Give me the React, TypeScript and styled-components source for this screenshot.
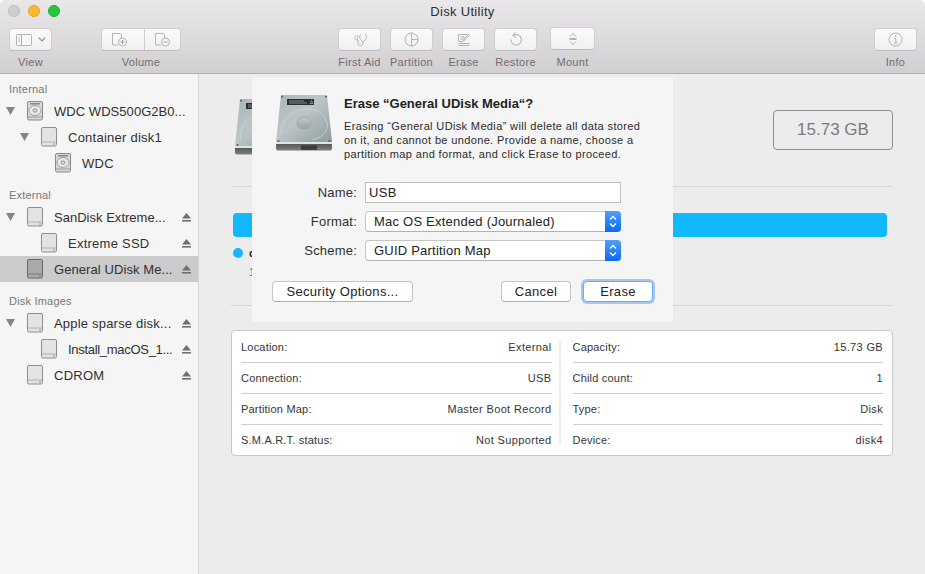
import React from "react";
import styled, { createGlobalStyle } from "styled-components";

const Global = createGlobalStyle`
  html, body { margin: 0; padding: 0; background: #fff; }
  body { font-family: "Liberation Sans", Arial, sans-serif; font-size: 13px; color: #2b2b2b; }
  * { box-sizing: border-box; }
`;

const Win = styled.div`
  position: relative; width: 925px; height: 574px; overflow: hidden;
  display: flex; flex-direction: column; border-radius: 5px 5px 0 0;
`;
const Toolbar = styled.header`
  height: 74px; flex: none; display: flex; flex-direction: column;
  background: linear-gradient(#e9e7e9, #d1cfd1); border-bottom: 1px solid #b1afb1;
`;
const TitleBar = styled.div`position: relative; height: 27px; text-align: center; line-height: 23px; font-size: 13px; color: #2e2e2e; letter-spacing: .3px;`;
const Lights = styled.div`position: absolute; left: 8px; top: 5px; display: flex; gap: 8px;`;
const Light = styled.span<{ $c: string; $b: string }>`
  width: 12px; height: 12px; border-radius: 50%; background: ${p => p.$c}; border: 1px solid ${p => p.$b};
`;
const Tools = styled.div`display: flex; padding-left: 9px;`;
const ToolItem = styled.div<{ $w: number; $ml: number }>`
  width: ${p => p.$w}px; margin-left: ${p => p.$ml}px; display: flex; flex-direction: column; align-items: center; flex: none;
`;
const ToolBtn = styled.div<{ $up?: boolean }>`
  width: 100%; height: 23px; margin-top: ${p => (p.$up ? 0 : 1)}px; margin-bottom: ${p => (p.$up ? 1 : 0)}px;
  display: flex; align-items: center; justify-content: center; gap: 6px;
  background: linear-gradient(#fbfbfb, #f1f0f1); border-radius: 4px; border: 1px solid #d0ced0; border-bottom-color: #bdbbbd;
`;
const Seg = styled.div<{ $div?: boolean }>`
  flex: 1; height: 100%; display: flex; align-items: center; justify-content: center;
  border-left: ${p => (p.$div ? "1px solid #cfcdcf" : "none")};
`;
const ToolLabel = styled.span`margin-top: 5px; font-size: 11px; line-height: 13px; color: #6f6d6f; white-space: nowrap; letter-spacing: .3px;`;

const Body = styled.div`flex: 1; display: flex; min-height: 0;`;
const Sidebar = styled.aside`width: 199px; flex: none; background: #f5f5f5; border-right: 1px solid #d6d6d6;`;
const SecHead = styled.div<{ $first?: boolean }>`
  height: ${p => (p.$first ? 24 : 22)}px; padding: ${p => (p.$first ? 9 : 7)}px 0 0 9px; font-size: 11px; line-height: 13px;
  color: #777; letter-spacing: .2px; margin-top: ${p => (p.$first ? 0 : 6)}px;
`;
const TreeRow = styled.div<{ $level: number; $sel?: boolean }>`
  height: 26px; display: flex; align-items: center; padding: 0 7px 0 ${p => 6 + p.$level * 14}px;
  background: ${p => (p.$sel ? "#cbcbcb" : "transparent")};
`;
const Disc = styled.span`width: 9px; margin-right: 12px; flex: none; display: flex;`;
const RowIcon = styled.span`width: 16px; height: 20px; margin-right: 11px; flex: none; display: flex;`;
const RowName = styled.span<{ $ls: number }>`font-size: 13px; color: #303030; white-space: nowrap; letter-spacing: ${p => p.$ls}px;`;
const Eject = styled.span`margin-left: auto; display: flex; flex: none;`;

const Main = styled.main`flex: 1; background: #ececec; padding: 0 32px;`;
const Head = styled.div`height: 113px; display: flex; justify-content: space-between; border-bottom: 1px solid #d6d6d6;`;
const HeadIcon = styled.div`margin: 25px 0 0 4px;`;
const SizePill = styled.div`
  margin-top: 36px; width: 120px; height: 40px; border: 1px solid #8e8e8e; border-radius: 4px;
  display: flex; align-items: center; justify-content: center; font-size: 17px; color: #7b7b7b;
`;
const UsageSec = styled.section`height: 119px; padding: 26px 6px 0 2px; border-bottom: 1px solid #d6d6d6;`;
const Bar = styled.div`height: 24px; border-radius: 4px; background: #12b8fd;`;
const Legend = styled.div`display: flex; gap: 6px; margin-top: 11px; align-items: center; height: 10px;`;
const Dot = styled.span`width: 10px; height: 10px; border-radius: 50%; background: #12b8fd;`;
const LegendName = styled.b`font-size: 11px; color: #222;`;
const LegendSize = styled.div`margin: 7px 0 0 16px; font-size: 11px; color: #666; line-height: 14px;`;

const Card = styled.section`
  margin-top: 24px; height: 126px; padding: 1px 9px 0; background: #fff; border: 1px solid #c8c8c8; border-radius: 4px; display: flex;
`;
const Col = styled.div`flex: 1;`;
const Sep = styled.div`width: 2px; margin: 9px 12px 10px 7px; background: #ebebeb;`;
const InfoRow = styled.div`
  height: 31px; display: flex; justify-content: space-between; align-items: center; font-size: 11px; color: #353535;
  letter-spacing: .2px; border-bottom: 1px solid #cfcfcf;
  &:last-child { border-bottom: none; height: 30px; }
`;
const InfoVal = styled.span`letter-spacing: .35px;`;

const Dialog = styled.div`
  position: absolute; left: 252px; top: 77px; width: 421px; height: 245px; background: #f5f5f5; padding: 18px 20px 0;
`;
const DlgHead = styled.div`display: flex; gap: 12px; padding-left: 4px; height: 87px;`;
const DlgTitle = styled.h1`margin: 1px 0 7px; font-size: 13px; line-height: 16px; font-weight: 700; color: #222;`;
const DlgText = styled.p`margin: 0; font-size: 11px; line-height: 14px; color: #2b2b2b; width: 302px; letter-spacing: .36px;`;
const FormRow = styled.div`display: flex; align-items: center; height: 21px; margin-bottom: 8px;`;
const FormLabel = styled.label`width: 85px; margin-right: 8px; text-align: right; font-size: 13px; color: #303030; letter-spacing: .2px;`;
const TextInput = styled.div`
  width: 256px; height: 21px; background: #fff; border: 1px solid #bdbdbd; padding-left: 3px; line-height: 20px; font-size: 13px; letter-spacing: .3px; color: #222;
`;
const Select = styled.div`
  width: 256px; height: 21px; background: #fff; border: 1px solid #c6c6c6; border-right: none; border-bottom-color: #b2b2b2; border-radius: 4px;
  display: flex; align-items: center; justify-content: space-between; padding-left: 8px; font-size: 13px; letter-spacing: .22px; color: #222;
`;
const Stepper = styled.span`
  width: 16px; height: 21px; margin: -1px 0; flex: none; border-radius: 0 4px 4px 0; display: flex; align-items: center; justify-content: center;
  background: linear-gradient(#4f9ffb, #0b69f1);
`;
const Footer = styled.div`display: flex; justify-content: space-between; align-items: center; margin-top: 20px;`;
const Right = styled.div`display: flex; gap: 12px;`;
const Btn = styled.div<{ $w: number; $focus?: boolean }>`
  width: ${p => p.$w}px; height: 21px; background: #fff; border-radius: 4px; border: 1px solid #c4c4c4; border-bottom-color: #aeaeae;
  display: flex; align-items: center; justify-content: center; font-size: 13px; letter-spacing: .3px; color: #222;
  ${p => (p.$focus ? "border-color: #6fa8ee; box-shadow: 0 0 0 2px #a3c8f5;" : "")}
`;

const s = "#b4b2b4";
const Sb = () => (
  <svg width="16" height="12" viewBox="0 0 16 12" fill="none"><rect x=".5" y=".5" width="15" height="11" rx="1" fill="#f8f8f8" stroke={s} /><path d="M5.5 1v10" stroke={s} /><path d="M2 3h2M2 5h2M2 7h2" stroke="#ccc" /></svg>
);
const Chev = () => (
  <svg width="8" height="5" viewBox="0 0 8 5" fill="none"><path d="M.7.7 4 4l3.3-3.3" stroke="#8e8c8e" strokeWidth="1.2" /></svg>
);
const Doc = ({ plus }: { plus?: boolean }) => (
  <svg width="17" height="15" viewBox="0 0 17 15" fill="none">
    <path d="M1.5 13V1.5h8l1 1V7M1.5 13H7" stroke={s} />
    <circle cx="11.5" cy="10" r="4" fill="#f6f6f6" stroke={s} />
    <path d={plus ? "M9.5 10h4M11.5 8v4" : "M9.5 10h4"} stroke="#9e9c9e" />
  </svg>
);
const FirstAid = () => (
  <svg width="16" height="14" viewBox="0 0 16 14" fill="none" stroke={s}>
    <path d="M9 1C7 3 7 6 11 9c4-3 4-6 2-8" />
    <path d="M11 9v1c0 3.500-5 3.500-5 0V7" />
    <path d="M6 7C4.200 7 2.500 6 3 4c.3-1 1-1.500 1.500-1.500S6 3 6 4c0 1-.5 2-1 3" />
  </svg>
);
const Partition = () => (
  <svg width="15" height="15" viewBox="0 0 15 15" fill="none" stroke={s}><circle cx="7.500" cy="7.500" r="6.500" /><path d="M7.500 1v13M7.500 7.500H14" /></svg>
);
const EraseI = () => (
  <svg width="14" height="14" viewBox="0 0 14 14" fill="none" stroke={s}>
    <path d="M10 1.500H1.500V8.500H6M1.500 10.500h11M1.500 12.500h11M3.500 4h4M3.500 6h3" /><path d="M12.500 2 8 7l-1.500 1 .5-2 4.500-5z" />
  </svg>
);
const Restore = () => (
  <svg width="14" height="15" viewBox="0 0 14 15" fill="none" stroke={s} strokeWidth="1.100">
    <path d="M4.500 3.300A5.200 5.200 0 1 1 2 7.500" /><path d="M6.500 .5 4 3.300l2.700 2.200" />
  </svg>
);
const Mount = () => (
  <svg width="10" height="14" viewBox="0 0 10 14" fill="none" stroke={s}><path d="M2 4.500 5 1.500l3 3M2 9.500l3 3 3-3M1.500 6.500h7M1.500 7.500h7" /></svg>
);
const Info = () => (
  <svg width="15" height="15" viewBox="0 0 15 15" fill="none" stroke={s}>
    <circle cx="7.500" cy="7.500" r="6.500" /><path d="M6 6.500h1.800V11M6 11h3.500" /><path d="M7 4h1.300" strokeWidth="1.500" />
  </svg>
);
const Tri = () => (
  <svg width="9" height="8" viewBox="0 0 9 8"><path d="M0 0h9L4.500 8z" fill="#858585" /></svg>
);
const EjectI = () => (
  <svg width="9" height="9" viewBox="0 0 9 9"><path d="M4.500 0 9 5.500H0z" fill="#6f6f6f" /><rect y="7" width="9" height="1.600" fill="#6f6f6f" /></svg>
);
const VolIcon = ({ sel }: { sel?: boolean }) => (
  <svg width="16" height="20" viewBox="0 0 16 20">
    <rect x=".5" y=".5" width="15" height="18.500" rx="1.500" fill={sel ? "#a9a9a9" : "#e3e3e3"} stroke={sel ? "#686868" : "#8e8e8e"} />
    <path d="M1 15h14" stroke={sel ? "#7a7a7a" : "#b0b0b0"} /><circle cx="13" cy="17" r=".7" fill="#666" />
  </svg>
);
const IntIcon = () => (
  <svg width="16" height="20" viewBox="0 0 16 20" fill="none">
    <rect x=".5" y=".5" width="15" height="18.500" rx="1.500" fill="#d8d8d8" stroke="#8a8a8a" />
    <rect x="3" y="2" width="10" height="1.500" fill="#888" />
    <ellipse cx="8" cy="9.500" rx="6" ry="5" fill="#e8e8e8" stroke="#a0a0a0" /><ellipse cx="8" cy="9.500" rx="2" ry="1.600" stroke="#888" />
    <path d="M1 16h14" stroke="#9a9a9a" />
  </svg>
);
const Hdd = ({ id }: { id: string }) => (
  <svg width="56" height="58" viewBox="0 0 56 58" fill="none">
    <defs>
      <linearGradient id={id} x1="0" y1="0" x2="1" y2="1"><stop offset="0" stopColor="#a9b5b8" /><stop offset=".45" stopColor="#bcc6c8" /><stop offset="1" stopColor="#8f9b9e" /></linearGradient>
      <linearGradient id={`${id}h`} x1="0" y1="0" x2="0" y2="1"><stop offset="0" stopColor="#c0c8ca" /><stop offset="1" stopColor="#98a3a6" /></linearGradient>
      <linearGradient id={`${id}b`} x1="0" y1="0" x2="0" y2="1"><stop offset="0" stopColor="#4a4d4e" /><stop offset="1" stopColor="#7d8081" /></linearGradient>
    </defs>
    <path d="M5 0h46l5 47H0z" fill={`url(#${id})`} />
    <path d="M5.500 40C4 26 14 15 30 14c12-.5 20 6 21.500 16-.5 8-7 13-15 14.500" stroke="#cdd5d7" strokeWidth=".8" />
    <path d="M9 36C11 26 19 21 30 21c8 0 14 3 16 9" stroke="#b2bbbd" strokeWidth=".7" />
    <ellipse cx="28" cy="28" rx="7" ry="6" fill={`url(#${id}h)`} stroke="#8f9a9d" strokeWidth=".6" />
    <rect x="11" y="4" width="27" height="6" fill="#2b3133" />
    <path d="M13 6h15M13 8h18" stroke="#a9b0b2" strokeWidth=".7" />
    <path d="M34 8.500l1.500-3 1.500 3z" stroke="#d0d5d6" strokeWidth=".5" />
    <circle cx="6" cy="1.800" r="1" fill="#555c5e" /><circle cx="50" cy="1.800" r="1" fill="#555c5e" />
    <circle cx="2.500" cy="46" r="1" fill="#555c5e" /><circle cx="53.500" cy="46" r="1" fill="#555c5e" />
    <path d="M0 47h56v6.500a2 2 0 0 1-2 2H2a2 2 0 0 1-2-2z" fill={`url(#${id}b)`} />
    <rect x="0" y="47" width="56" height="2" fill="#dfe3e3" />
    <path d="M26 50.500v4.500M28 50.500v4.500M30 50.500v4.500M32 50.500v4.500M34 50.500v4.500M36 50.500v4.500M38 50.500v4.500M40 50.500v4.500" stroke="#0e0e0e" />
  </svg>
);
const StepI = () => (
  <svg width="8" height="13" viewBox="0 0 8 13" fill="none" stroke="#fff" strokeWidth="1.300"><path d="M1 4.500 4 1.500l3 3M1 8.500l3 3 3-3" /></svg>
);

type Item = { kind: "head" | "row"; name: string; level?: number; tri?: boolean; icon?: "v" | "i"; eject?: boolean; sel?: boolean; ls?: number };
const tree: Item[] = [
  { kind: "head", name: "Internal" },
  { kind: "row", name: "WDC WDS500G2B0...", level: 0, tri: true, icon: "i", ls: 0.05 },
  { kind: "row", name: "Container disk1", level: 1, tri: true, icon: "v", ls: 0.25 },
  { kind: "row", name: "WDC", level: 2, icon: "i", ls: 0.25 },
  { kind: "head", name: "External" },
  { kind: "row", name: "SanDisk Extreme...", level: 0, tri: true, icon: "v", eject: true, ls: 0.02 },
  { kind: "row", name: "Extreme SSD", level: 1, icon: "v", eject: true, ls: 0.25 },
  { kind: "row", name: "General UDisk Me...", level: 0, icon: "v", eject: true, sel: true, ls: 0.08 },
  { kind: "head", name: "Disk Images" },
  { kind: "row", name: "Apple sparse disk...", level: 0, tri: true, icon: "v", eject: true, ls: 0.2 },
  { kind: "row", name: "Install_macOS_1...", level: 1, icon: "v", eject: true, ls: -0.3 },
  { kind: "row", name: "CDROM", level: 0, icon: "v", eject: true, ls: 0.25 },
];

const left = [["Location:", "External"], ["Connection:", "USB"], ["Partition Map:", "Master Boot Record"], ["S.M.A.R.T. status:", "Not Supported"]];
const right = [["Capacity:", "15.73 GB"], ["Child count:", "1"], ["Type:", "Disk"], ["Device:", "disk4"]];

export default function App() {
  return (
    <Win>
      <Global />
      <Toolbar>
        <TitleBar>
          <Lights>
            <Light $c="#cfcdcf" $b="#bdbbbd" /><Light $c="#fdb82d" $b="#e5a321" /><Light $c="#25c73d" $b="#1eae31" />
          </Lights>
          Disk Utility
        </TitleBar>
        <Tools>
          <ToolItem $w={43} $ml={0}><ToolBtn><Sb /><Chev /></ToolBtn><ToolLabel>View</ToolLabel></ToolItem>
          <ToolItem $w={80} $ml={49}>
            <ToolBtn><Seg><Doc plus /></Seg><Seg $div><Doc /></Seg></ToolBtn><ToolLabel>Volume</ToolLabel>
          </ToolItem>
          <ToolItem $w={43} $ml={157}><ToolBtn><FirstAid /></ToolBtn><ToolLabel>First Aid</ToolLabel></ToolItem>
          <ToolItem $w={43} $ml={9}><ToolBtn><Partition /></ToolBtn><ToolLabel>Partition</ToolLabel></ToolItem>
          <ToolItem $w={43} $ml={9}><ToolBtn><EraseI /></ToolBtn><ToolLabel>Erase</ToolLabel></ToolItem>
          <ToolItem $w={43} $ml={9}><ToolBtn><Restore /></ToolBtn><ToolLabel>Restore</ToolLabel></ToolItem>
          <ToolItem $w={45} $ml={13}><ToolBtn $up><Mount /></ToolBtn><ToolLabel>Mount</ToolLabel></ToolItem>
          <ToolItem $w={43} $ml={279}><ToolBtn><Info /></ToolBtn><ToolLabel>Info</ToolLabel></ToolItem>
        </Tools>
      </Toolbar>
      <Body>
        <Sidebar>
          {tree.map((it, i) =>
            it.kind === "head" ? (
              <SecHead key={i} $first={i === 0}>{it.name}</SecHead>
            ) : (
              <TreeRow key={i} $level={it.level ?? 0} $sel={it.sel}>
                <Disc>{it.tri ? <Tri /> : null}</Disc>
                <RowIcon>{it.icon === "i" ? <IntIcon /> : <VolIcon sel={it.sel} />}</RowIcon>
                <RowName $ls={it.ls ?? 0.2}>{it.name}</RowName>
                {it.eject ? <Eject><EjectI /></Eject> : null}
              </TreeRow>
            )
          )}
        </Sidebar>
        <Main>
          <Head>
            <HeadIcon><Hdd id="a" /></HeadIcon>
            <SizePill>15.73 GB</SizePill>
          </Head>
          <UsageSec>
            <Bar />
            <Legend><Dot /><LegendName>disk4</LegendName></Legend>
            <LegendSize>15.73 GB</LegendSize>
          </UsageSec>
          <Card>
            <Col>{left.map(r => <InfoRow key={r[0]}><span>{r[0]}</span><InfoVal>{r[1]}</InfoVal></InfoRow>)}</Col>
            <Sep />
            <Col>{right.map(r => <InfoRow key={r[0]}><span>{r[0]}</span><InfoVal>{r[1]}</InfoVal></InfoRow>)}</Col>
          </Card>
        </Main>
      </Body>
      <Dialog>
        <DlgHead>
          <Hdd id="b" />
          <div>
            <DlgTitle>Erase “General UDisk Media“?</DlgTitle>
            <DlgText>Erasing “General UDisk Media” will delete all data stored on it, and cannot be undone. Provide a name, choose a partition map and format, and click Erase to proceed.</DlgText>
          </div>
        </DlgHead>
        <FormRow><FormLabel>Name:</FormLabel><TextInput>USB</TextInput></FormRow>
        <FormRow><FormLabel>Format:</FormLabel><Select>Mac OS Extended (Journaled)<Stepper><StepI /></Stepper></Select></FormRow>
        <FormRow><FormLabel>Scheme:</FormLabel><Select>GUID Partition Map<Stepper><StepI /></Stepper></Select></FormRow>
        <Footer>
          <Btn $w={141}>Security Options...</Btn>
          <Right><Btn $w={70}>Cancel</Btn><Btn $w={70} $focus>Erase</Btn></Right>
        </Footer>
      </Dialog>
    </Win>
  );
}
